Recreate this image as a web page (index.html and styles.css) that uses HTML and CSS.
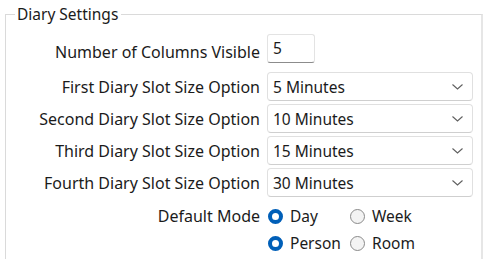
FILE: index.html
```html
<!DOCTYPE html>
<html>
<head>
<meta charset="utf-8">
<link rel="stylesheet" href="styles.css">
</head>
<body>
<fieldset class="group">
  <legend class="group-title">Diary Settings</legend>
  <div class="form">
    <label class="lbl">Number of Columns Visible</label>
    <div class="textbox">5</div>

    <label class="lbl">First Diary Slot Size Option</label>
    <div class="combo"><span>5 Minutes</span><svg class="chev" width="11" height="6" viewBox="0 0 11 6"><path d="M0.5 0.5 L5.5 5 L10.5 0.5" fill="none" stroke="#5f5f5f" stroke-width="1.1"/></svg></div>

    <label class="lbl">Second Diary Slot Size Option</label>
    <div class="combo"><span>10 Minutes</span><svg class="chev" width="11" height="6" viewBox="0 0 11 6"><path d="M0.5 0.5 L5.5 5 L10.5 0.5" fill="none" stroke="#5f5f5f" stroke-width="1.1"/></svg></div>

    <label class="lbl">Third Diary Slot Size Option</label>
    <div class="combo"><span>15 Minutes</span><svg class="chev" width="11" height="6" viewBox="0 0 11 6"><path d="M0.5 0.5 L5.5 5 L10.5 0.5" fill="none" stroke="#5f5f5f" stroke-width="1.1"/></svg></div>

    <label class="lbl">Fourth Diary Slot Size Option</label>
    <div class="combo"><span>30 Minutes</span><svg class="chev" width="11" height="6" viewBox="0 0 11 6"><path d="M0.5 0.5 L5.5 5 L10.5 0.5" fill="none" stroke="#5f5f5f" stroke-width="1.1"/></svg></div>

    <label class="lbl lbl-mode">Default Mode</label>
    <div class="radios">
      <div class="radio"><span class="dot on"></span><span>Day</span></div>
      <div class="radio"><span class="dot"></span><span>Week</span></div>
      <div class="radio"><span class="dot on"></span><span>Person</span></div>
      <div class="radio"><span class="dot"></span><span>Room</span></div>
    </div>
  </div>
</fieldset>
</body>
</html>
```

FILE: styles.css
```css
html, body {
  margin: 0;
  padding: 0;
  overflow: hidden;
  background: #ffffff;
}
body {
  font-family: "Noto Sans", "Open Sans", sans-serif;
  font-size: 15.5px;
  color: #1b1b1b;
}
.group {
  margin: 5px 0 0 5px;
  width: 478px;
  height: 300px;
  padding: 5px 0 0 9px;
  border: 1px solid #dadada;
  border-right: 2px solid #e6e6e6;
  box-sizing: border-box;
  min-width: 0;
}
.group-title {
  padding: 0 3px 0 2px;
  line-height: 19px;
}
.form {
  display: grid;
  grid-template-columns: 245px 206px;
  column-gap: 7px;
  row-gap: 3px;
  align-items: center;
  margin-top: 5px;
}
.lbl {
  text-align: right;
  white-space: nowrap;
  font-size: 16px;
  line-height: 20px;
}
.textbox {
  width: 48px;
  height: 29px;
  box-sizing: border-box;
  border: 1px solid #e3e3e3;
  border-bottom: 1px solid #8c8c8c;
  border-radius: 3px;
  padding: 0 5px;
  line-height: 27px;
  margin-bottom: 6px;
}
.combo {
  height: 29px;
  box-sizing: border-box;
  border: 1px solid #e0e0e0;
  border-bottom-color: #cfcfcf;
  border-radius: 4px;
  display: flex;
  align-items: center;
  justify-content: space-between;
  padding: 0 9px 0 5px;
  white-space: nowrap;
}
.chev {
  display: block;
}
.lbl-mode {
  align-self: start;
  line-height: 22px;
  margin-top: 5px;
}
.radios {
  display: grid;
  grid-template-columns: 82px auto;
  row-gap: 5px;
  margin-top: 5px;
}
.radio {
  display: flex;
  align-items: center;
  gap: 7px;
  height: 22px;
  white-space: nowrap;
}
.dot {
  width: 15px;
  height: 15px;
  box-sizing: border-box;
  border-radius: 50%;
  border: 1px solid #8a8a8a;
  background: #f3f3f3;
  margin-left: 1px;
  flex: none;
}
.dot.on {
  border: 4px solid #005fb8;
  background: #ffffff;
}
```
